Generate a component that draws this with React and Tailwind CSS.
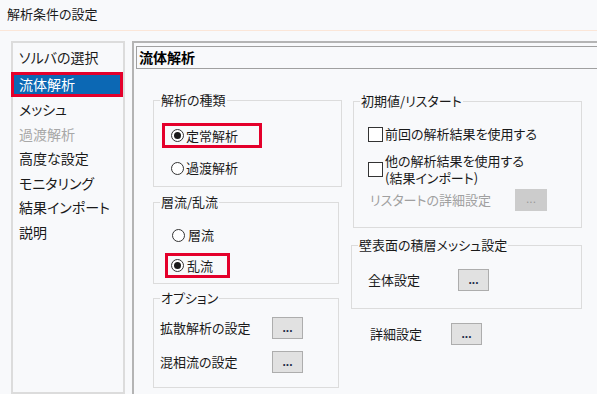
function Radio({ checked }) {
  return (
    <span className="w-[13px] h-[13px] rounded-full border border-[#333] bg-white flex items-center justify-center shrink-0">
      {checked && <span className="w-[7px] h-[7px] rounded-full bg-[#1a1a1a]" />}
    </span>
  )
}

function Check() {
  return <span className="w-[15px] h-[15px] border border-[#333] bg-white shrink-0" />
}

function DotButton({ disabled }) {
  if (disabled) {
    return (
      <span className="w-[32px] h-[22px] bg-[#cccccc] text-[#999] text-[12px] leading-[20px] text-center font-['Liberation_Sans',sans-serif]">
        ...
      </span>
    )
  }
  return (
    <span className="w-[31px] h-[22px] bg-[#e1e1e1] border border-[#adadad] text-[#1f2d4a] text-[12px] leading-[20px] text-center font-bold font-['Liberation_Sans',sans-serif]">
      ...
    </span>
  )
}

function Group({ title, className, children }) {
  return (
    <fieldset className={`border border-[#dcdcdc] pl-[6px] flex flex-col ${className}`}>
      <legend className="px-[1px] text-[13px] leading-[14px] text-[#1a1a1a]">{title}</legend>
      {children}
    </fieldset>
  )
}

const navItems = ['メッシュ', '過渡解析', '高度な設定', 'モニタリング', '結果インポート', '説明']

export default function App() {
  return (
    <div className="w-[597px] h-[394px] overflow-hidden bg-[#f8f9fb] flex flex-col text-[#1a1a1a] font-['Noto_Sans_CJK_JP','Noto_Sans',sans-serif] [font-feature-settings:'palt']">
      {/* Title */}
      <div className="h-[31px] shrink-0 border-b border-[#fbe6d8] pl-[7px] pt-[6px] text-[13px] leading-[16px]">
        解析条件の設定
      </div>

      <div className="flex flex-1 pt-[10px]">
        {/* Left nav */}
        <div className="ml-[11px] w-[114px] border-2 border-[#dcdcdc] flex flex-col pt-[2px] text-[14px]">
          <div className="h-[24px] leading-[24px] pl-[6px]">ソルバの選択</div>
          <div className="mt-[3px] -ml-[2px] w-[112px] h-[25px] border-[3px] border-[#e4002b] bg-[#0c68b4] text-white pl-[5px] leading-[19px]">
            流体解析
          </div>
          {navItems.map((t) => (
            <div
              key={t}
              className={`h-[24.5px] leading-[24.5px] pl-[6px] ${t === '過渡解析' ? 'text-[#a8a8a8]' : ''}`}
            >
              {t}
            </div>
          ))}
        </div>

        {/* Right panel */}
        <div className="ml-[7px] flex-1 border-l-2 border-t-2 border-[#b4b4b4] flex flex-col">
          <div className="ml-[2px] mt-[3px] h-[23px] border border-r-0 border-[#a0a0a0] pl-[2px] text-[14px] leading-[21px] font-bold text-black">
            流体解析
          </div>

          <div className="flex pl-[19px] mt-[24px] gap-[11px] text-[13px]">
            {/* Left column */}
            <div className="flex flex-col">
              <Group title="解析の種類" className="w-[189px] h-[94px]">
                <div className="mt-[16px] ml-[2px] w-[100px] h-[25px] border-[3px] border-[#e4002b] pl-[6px] flex items-center gap-[2px]">
                  <Radio checked />
                  <span>定常解析</span>
                </div>
                <div className="mt-[10px] ml-[11px] h-[20px] flex items-center gap-[2px]">
                  <Radio />
                  <span>過渡解析</span>
                </div>
              </Group>

              <Group title="層流/乱流" className="mt-[8px] w-[186px] h-[89px]">
                <div className="mt-[16px] ml-[12px] h-[20px] flex items-center gap-[3px]">
                  <Radio />
                  <span>層流</span>
                </div>
                <div className="mt-[8px] ml-[5px] w-[65px] h-[25px] border-[3px] border-[#e4002b] pl-[3px] flex items-center gap-[3px]">
                  <Radio checked />
                  <span>乱流</span>
                </div>
              </Group>

              <Group title="オプション" className="mt-[7px] w-[186px] h-[97px]">
                <div className="mt-[12px] h-[22px] flex items-center">
                  <span className="w-[112px]">拡散解析の設定</span>
                  <DotButton />
                </div>
                <div className="mt-[12px] h-[22px] flex items-center">
                  <span className="w-[112px]">混相流の設定</span>
                  <DotButton />
                </div>
              </Group>
            </div>

            {/* Right column */}
            <div className="flex flex-col mt-[1px]">
              <Group title="初期値/リスタート" className="w-[229px] h-[134px]">
                <div className="mt-[18px] ml-[8px] h-[16px] flex items-center gap-[2px]">
                  <Check />
                  <span>前回の解析結果を使用する</span>
                </div>
                <div className="mt-[10px] ml-[8px] flex items-center gap-[2px]">
                  <Check />
                  <div className="flex flex-col">
                    <span className="h-[17px] leading-[17px]">他の解析結果を使用する</span>
                    <span className="h-[17px] leading-[17px]">(結果インポート)</span>
                  </div>
                </div>
                <div className="mt-[3px] ml-[10px] h-[22px] flex items-center">
                  <span className="w-[145px] text-[#a0a0a0]">リスタートの詳細設定</span>
                  <DotButton disabled />
                </div>
              </Group>

              <Group title="壁表面の積層メッシュ設定" className="mt-[10px] -ml-[2px] w-[231px] h-[71px]">
                <div className="mt-[17px] ml-[10px] h-[22px] flex items-center">
                  <span className="w-[90px]">全体設定</span>
                  <DotButton />
                </div>
              </Group>

              <div className="mt-[14px] ml-[17px] h-[22px] flex items-center">
                <span className="w-[81px]">詳細設定</span>
                <DotButton />
              </div>
            </div>
          </div>
        </div>
      </div>
    </div>
  )
}
